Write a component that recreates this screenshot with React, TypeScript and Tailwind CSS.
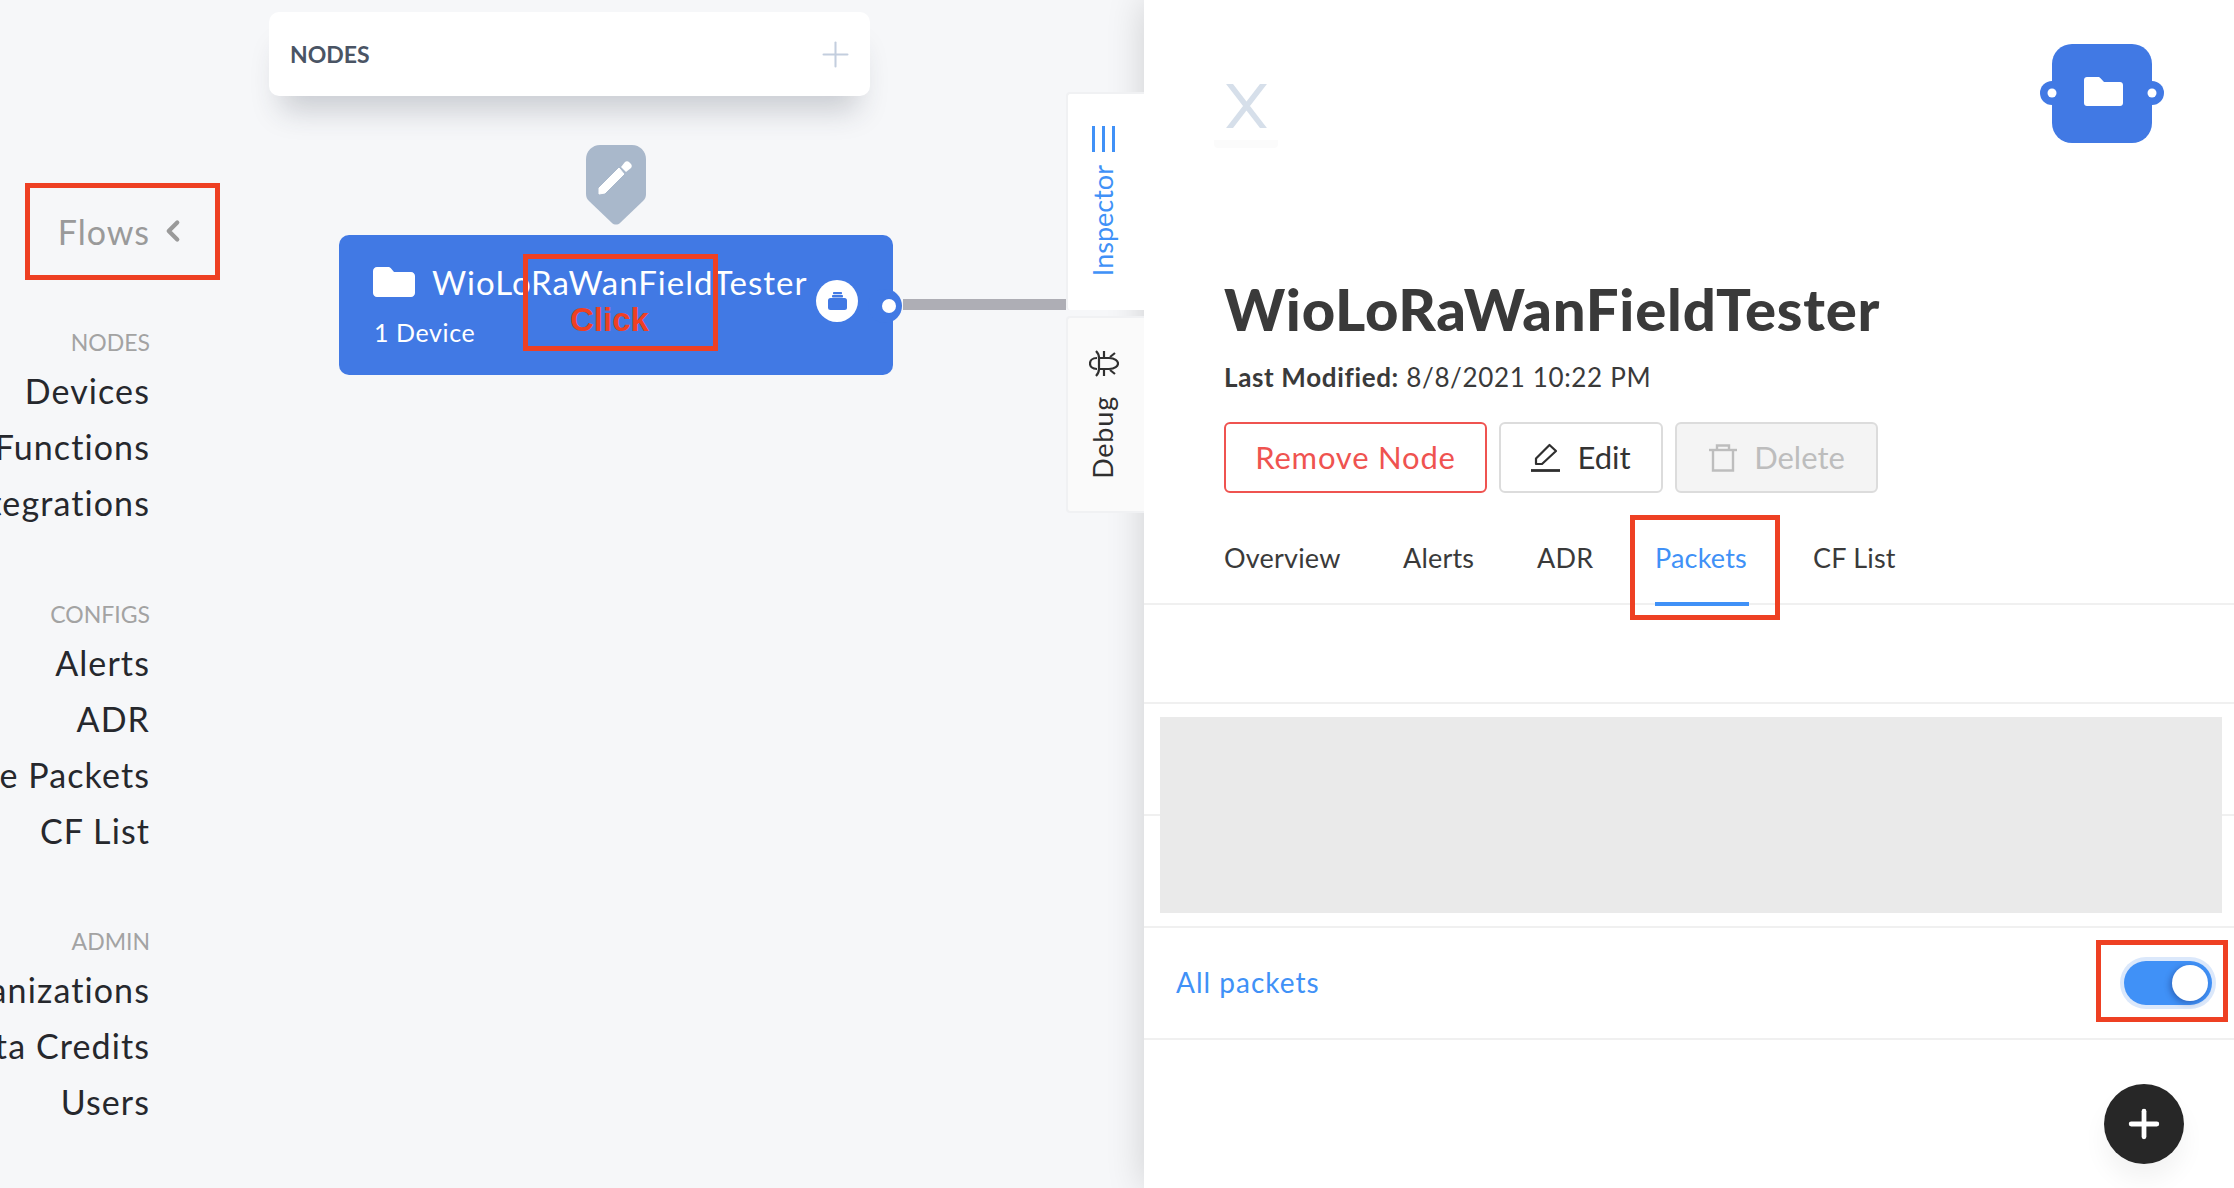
import React from 'react';
import { ChevronLeft, Plus } from 'lucide-react';

const FONT = { fontFamily: 'Lato, "Open Sans", sans-serif' };

const NAV = [
  { title: 'NODES', top: 'mt-[74px]', items: ['Devices', 'Functions', 'Integrations'] },
  { title: 'CONFIGS', top: 'mt-[69px]', items: ['Alerts', 'ADR', 'Multiple Packets', 'CF List'] },
  { title: 'ADMIN', top: 'mt-[68px]', items: ['Organizations', 'Data Credits', 'Users'] },
];

const TABS = [
  { label: 'Overview', cls: 'w-[179px] text-[#3a3a3a]' },
  { label: 'Alerts', cls: 'w-[134px] text-[#3a3a3a]' },
  { label: 'ADR', cls: 'w-[118px] text-[#3a3a3a]' },
  { label: 'Packets', cls: 'w-[158px] text-[#4091f7]', active: true },
  { label: 'CF List', cls: 'w-[100px] text-[#3a3a3a]' },
];

function FolderIcon({ className }: { className: string }) {
  return (
    <svg viewBox="0 0 42 30" className={className} fill="currentColor">
      <path d="M4 0h11c1.500 0 2.500.6 3.300 1.700L21 5h17c2.200 0 4 1.800 4 4v17c0 2.200-1.800 4-4 4H4c-2.200 0-4-1.800-4-4V4c0-2.200 1.800-4 4-4z" />
    </svg>
  );
}

function BugIcon() {
  return (
    <svg viewBox="0 0 30 27" className="w-[30px] h-[27px]" fill="none" stroke="#2f2f2f" strokeWidth="2.2">
      <path d="M8 8C3 8 1 11 1 13.500S3 19 8 19" />
      <path d="M7 1c2 2 3 4 3 7v11c0 3-1 5-3 7" />
      <path d="M10 8h10c6 0 9 3 9 5.500S26 19 20 19H10" />
      <path d="M15 1v7M15 19v7M21 7l5-4M21 20l5 4" />
    </svg>
  );
}

function EditIcon() {
  return (
    <svg viewBox="0 0 30 30" className="w-[30px] h-[30px]" fill="none" stroke="#2f2f2f" strokeWidth="2.2" strokeLinejoin="round">
      <path d="M5 21v-5.500L18.500 2 25 8 11 21z" />
      <path d="M0 27.500h29" strokeWidth="2.800" />
    </svg>
  );
}

function TrashIcon() {
  return (
    <svg viewBox="0 0 30 28" className="w-[30px] h-[28px]" fill="none" stroke="#bdbdbd" strokeWidth="2.400">
      <path d="M1 6h28" />
      <path d="M9 6V1.500h12V6" />
      <path d="M5 6v20.500h20V6" />
    </svg>
  );
}

function RedBox({ className }: { className: string }) {
  return <div className={`absolute border-[5px] border-[#ee4023] pointer-events-none ${className}`} />;
}

export default function App() {
  return (
    <div className="relative flex w-[2234px] h-[1188px] overflow-hidden bg-[#f6f7f9]" style={FONT}>
      <aside className="w-[190px] shrink-0 flex flex-col items-end pr-[40px] pt-[208px] whitespace-nowrap">
        <div className="relative flex items-center h-[46px] text-[34px] tracking-[1px] text-[#9a9a9a]">
          Flows
          <ChevronLeft className="absolute left-[100%] ml-[6px] w-[34px] h-[34px]" strokeWidth={3} />
        </div>
        {NAV.map((group) => (
          <div key={group.title} className={`${group.top} flex flex-col items-end`}>
            <div className="h-[35px] leading-[28px] text-[23px] text-[#a3a3a3]">{group.title}</div>
            {group.items.map((item) => (
              <div key={item} className="h-[56px] leading-[56px] text-[34px] tracking-[1.100px] text-[#26282d]">{item}</div>
            ))}
          </div>
        ))}
      </aside>

      <main className="relative flex-1">
        <div className="absolute left-[79px] top-[12px] w-[601px] h-[84px] rounded-[10px] bg-white flex items-center justify-between pl-[21px] pr-[14px] shadow-[0_26px_30px_-12px_rgba(40,50,70,0.22)]">
          <span className="text-[23px] font-bold text-[#4a5464]">NODES</span>
          <Plus className="w-[41px] h-[41px] text-[#c3cede]" strokeWidth={1.200} />
        </div>

        <svg viewBox="0 0 60 80" className="absolute left-[396px] top-[145px] w-[60px] h-[80px]">
          <path d="M14 0h32c7.700 0 14 6.300 14 14v35c0 3-1 5-3 7L34 78c-2.200 2-5.800 2-8 0L3 56c-2-2-3-4-3-7V14C0 6.300 6.300 0 14 0z" fill="#a9b8cb" />
          <path d="M13 43v6l6-1 19-19-5-6z" fill="#fff" stroke="#fff" strokeLinejoin="round" />
          <path d="M35 22l4-5c1-1 3-1 4 0l2 2c1 1 1 3 0 4l-5 4z" fill="#fff" />
        </svg>

        <div className="absolute left-[149px] top-[235px] w-[554px] h-[140px] rounded-[10px] bg-[#4179e4] text-white">
          <div className="flex items-center pl-[34px] pt-[27px]">
            <FolderIcon className="w-[42px] h-[30px]" />
            <span className="ml-[17px] text-[33px] tracking-[1px] leading-[40px] whitespace-nowrap">WioLoRaWanFieldTester</span>
          </div>
          <div className="pl-[35px] mt-[14px] text-[25px] tracking-[0.600px] leading-[32px]">1 Device</div>
          <div className="absolute left-[477px] top-[45px] w-[42px] h-[42px] rounded-full bg-white flex items-center justify-center">
            <svg viewBox="0 0 19 18" className="w-[19px] h-[18px]" fill="#4179e4">
              <rect x="5" y="0" width="9" height="2.200" rx="0.800" />
              <rect x="4" y="3" width="11" height="2.500" rx="0.800" />
              <rect x="0" y="6" width="19" height="12" rx="2.500" />
            </svg>
          </div>
          <div className="absolute left-[529px] top-[54px] w-[34px] h-[34px] rounded-full bg-[#4179e4]" />
          <div className="absolute left-[543px] top-[64px] w-[14px] h-[14px] rounded-full bg-white" />
        </div>

        <div className="absolute left-[713px] top-[299px] right-0 h-[11px] bg-[#aeaeb5]" />
      </main>

      <div className="relative z-10 w-[78px] shrink-0 flex flex-col pt-[92px] gap-[6px]">
        <div className="h-[218px] bg-white rounded-l-[4px] border-l-2 border-t-2 border-[#f0f1f3] flex flex-col items-center pt-[32px] pr-[5px] text-[#4091f7]">
          <div className="flex gap-[7px] h-[26px]">
            <div className="w-[3px] bg-[#4091f7]" />
            <div className="w-[3px] bg-[#4091f7]" />
            <div className="w-[3px] bg-[#4091f7]" />
          </div>
          <span className="mt-[13px] text-[27px] [writing-mode:vertical-rl] rotate-180">Inspector</span>
        </div>
        <div className="h-[197px] bg-[#fafafa] rounded-l-[4px] border-l-2 border-y-2 border-[#f0f1f3] flex flex-col items-center pt-[32px] pr-[5px] text-[#2f2f2f]">
          <BugIcon />
          <span className="mt-[19px] text-[27px] tracking-[0.800px] [writing-mode:vertical-rl] rotate-180">Debug</span>
        </div>
      </div>

      <section className="relative w-[1090px] shrink-0 bg-white shadow-[0_0_36px_rgba(0,0,0,0.16)]">
        <div className="flex justify-between items-start pl-[80px] pr-[70px] pt-[44px] h-[279px]">
          <div className="-ml-[10px] mt-[40px] flex flex-col items-center">
            <svg viewBox="0 0 43 44" className="w-[43px] h-[44px]" stroke="#d6dfea" strokeWidth="5.500" fill="none">
              <path d="M3-2l37 48M40-2L3 46" />
            </svg>
            <div className="mt-[12px] w-[64px] h-[8px] rounded-b-[4px] bg-[#fbfbfb]" />
          </div>
          <svg viewBox="0 0 124 100" className="w-[124px] h-[100px]">
            <circle cx="12" cy="49" r="12" fill="#4179e4" />
            <circle cx="112" cy="49" r="12" fill="#4179e4" />
            <rect x="12" y="0" width="100" height="99" rx="20" fill="#4179e4" />
            <circle cx="12" cy="49" r="4.500" fill="#fff" />
            <circle cx="112" cy="49" r="4.500" fill="#fff" />
            <path d="M47 33h11c1.500 0 2 .6 3 1.700L64 38h16c1.700 0 3 1.300 3 3v18c0 1.700-1.300 3-3 3H47c-1.700 0-3-1.300-3-3V36c0-1.700 1.300-3 3-3z" fill="#fff" />
          </svg>
        </div>

        <div className="pl-[80px]">
          <h1 className="h-[60px] leading-[60px] text-[58px] tracking-[0.800px] font-black text-[#3a3a3a] whitespace-nowrap">WioLoRaWanFieldTester</h1>
          <div className="mt-[17px] h-[42px] leading-[42px] text-[26px] tracking-[0.650px] text-[#3a3a3a]">
            <b>Last Modified:</b> 8/8/2021 10:22 PM
          </div>
          <div className="mt-[24px] flex gap-[12px] text-[31px]">
            <button className="w-[263px] h-[71px] rounded-[6px] border-2 border-[#ef5350] text-[#ef5350] tracking-[0.800px]">Remove Node</button>
            <button className="w-[164px] h-[71px] rounded-[6px] border-2 border-[#dcdcdc] text-[#333] flex items-center justify-center gap-[16px]">
              <EditIcon />
              Edit
            </button>
            <button className="w-[203px] h-[71px] rounded-[6px] border-2 border-[#dcdcdc] bg-[#f4f4f4] text-[#bdbdbd] flex items-center justify-center gap-[16px]">
              <TrashIcon />
              Delete
            </button>
          </div>
        </div>

        <div className="mt-[21px] h-[91px] pl-[80px] flex border-b-2 border-[#f0f0f0]">
          {TABS.map((tab) => (
            <div key={tab.label} className={`${tab.cls} relative text-[27px] tracking-[0.200px] pt-[24px]`}>
              {tab.label}
              {tab.active && <div className="absolute left-0 w-[94px] top-[88px] h-[4px] bg-[#4091f7]" />}
            </div>
          ))}
        </div>

        <div className="h-[99px] border-b-2 border-[#f0f0f0]" />

        <div className="relative h-[224px] border-b-2 border-[#f0f0f0] flex flex-col justify-center">
          <div className="absolute left-0 right-0 top-[110px] h-[2px] bg-[#f0f0f0]" />
          <div className="relative ml-[16px] mr-[12px] h-[196px] bg-[#eaeaea]" />
        </div>

        <div className="h-[112px] border-b-2 border-[#f0f0f0] flex items-center justify-between pl-[32px] pr-[22px]">
          <span className="-mt-[2px] text-[28px] tracking-[1px] text-[#4091f7]">All packets</span>
          <div className="relative w-[88px] h-[44px] rounded-full bg-[#4091f7] shadow-[0_0_0_4px_#dbe8fb]">
            <div className="absolute right-[4px] top-[4px] w-[36px] h-[36px] rounded-full bg-white shadow-[-2px_2px_6px_rgba(0,0,60,0.3)]" />
          </div>
        </div>

        <div className="absolute left-[960px] top-[1084px] w-[80px] h-[80px] rounded-full bg-[#272727] flex items-center justify-center shadow-[0_16px_24px_rgba(0,0,0,0.05)]">
          <Plus className="w-[44px] h-[44px] text-white" strokeWidth={2.600} />
        </div>
      </section>

      <RedBox className="left-[25px] top-[183px] w-[195px] h-[97px]" />
      <RedBox className="left-[523px] top-[254px] w-[195px] h-[97px]" />
      <RedBox className="left-[1630px] top-[515px] w-[150px] h-[105px]" />
      <RedBox className="left-[2096px] top-[940px] w-[132px] h-[82px]" />
      <span className="absolute left-[570px] top-[300px] text-[33px] leading-[40px] font-bold text-[#ee4023]" style={{ fontFamily: '"Liberation Sans", sans-serif' }}>Click</span>
    </div>
  );
}
